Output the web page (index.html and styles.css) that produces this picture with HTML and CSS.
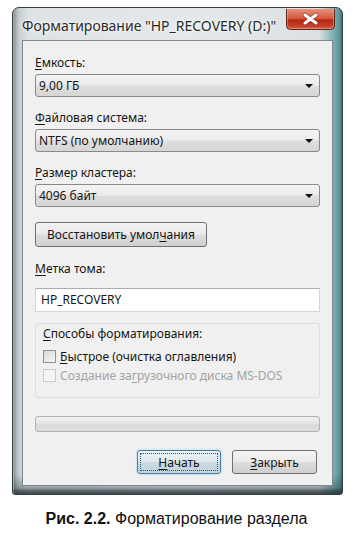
FILE: index.html
```html
<!DOCTYPE html>
<html lang="ru">
<head>
<meta charset="utf-8">
<link rel="stylesheet" href="styles.css">
</head>
<body>
<div class="window">
  <div class="titlebar">
    <span class="title">Форматирование "HP_RECOVERY (D:)"</span>
    <svg class="closebtn" width="49" height="21" viewBox="0 0 49 21">
      <defs>
        <linearGradient id="cg" x1="0" y1="0" x2="0" y2="1">
          <stop offset="0" stop-color="#e8907c"/>
          <stop offset="0.45" stop-color="#d35a40"/>
          <stop offset="0.55" stop-color="#b3270f"/>
          <stop offset="0.85" stop-color="#c6432a"/>
          <stop offset="1" stop-color="#dc7058"/>
        </linearGradient>
      </defs>
      <path d="M0.5 0 V16.5 Q0.5 20.5 4.5 20.5 H44.5 Q48.5 20.5 48.5 16.5 V0" fill="url(#cg)" stroke="#5e2418" stroke-width="1"/>
      <path d="M1.5 0 V16 Q1.5 19.5 5 19.5 H44 Q47.5 19.5 47.5 16 V0" fill="none" stroke="#f2b6a8" stroke-opacity="0.45" stroke-width="1"/>
      <path d="M19 6 L30 14 M30 6 L19 14" stroke="#6a1e12" stroke-width="4.6" stroke-linecap="round" stroke-opacity="0.55"/>
      <path d="M19 6 L30 14 M30 6 L19 14" stroke="#ffffff" stroke-width="3" stroke-linecap="round"/>
    </svg>
  </div>
  <div class="client">
    <div class="label l1"><u>Е</u>мкость:</div>
    <div class="combo"><span>9,00 ГБ</span><i class="arrow"></i></div>
    <div class="label l2"><u>Ф</u>айловая система:</div>
    <div class="combo"><span>NTFS (по умолчанию)</span><i class="arrow"></i></div>
    <div class="label l2"><u>Р</u>азмер кластера:</div>
    <div class="combo"><span>4096 байт</span><i class="arrow"></i></div>
    <div class="btn restore">Восстановить умол<u>ч</u>ания</div>
    <div class="label l3"><u>М</u>етка тома:</div>
    <div class="input">HP_RECOVERY</div>
    <div class="group">
      <div class="glabel"><u>С</u>пособы форматирования:</div>
      <div class="check"><i class="box"></i><span><u>Б</u>ыстрое (очистка оглавления)</span></div>
      <div class="check disabled"><i class="box"></i><span>Создание за<u>г</u>рузочного диска MS-DOS</span></div>
    </div>
    <div class="progress"></div>
    <div class="actions">
      <div class="btn primary"><span class="focus"><u>Н</u>ачать</span></div>
      <div class="btn"><u>З</u>акрыть</div>
    </div>
  </div>
</div>
<div class="caption"><b>Рис. 2.2.</b> Форматирование раздела</div>
</body>
</html>
```
FILE: styles.css
```css
html, body { margin: 0; padding: 0; background: #fff; }
body { width: 353px; height: 533px; overflow: hidden; font-family: "Noto Sans", "DejaVu Sans", sans-serif; }

.window {
  margin: 7px 0 0 12px;
  width: 331px;
  box-sizing: border-box;
  border: 1px solid #363d40;
  border-radius: 7px 7px 3px 3px;
  background:
    linear-gradient(180deg, rgba(0,0,0,0) 0%, rgba(0,0,0,0) 96%, rgba(40,55,60,0.55) 100%),
    linear-gradient(90deg, #8f989c 0%, #c9d0d3 2%, #dde2e4 5%, #e4e8ea 50%, #dbe1e3 93%, #86b4b7 97%, #4a8a8e 100%);
  padding: 0 9px 8px 9px;
  box-shadow: inset 0 -4px 3px rgba(30,45,50,0.6), inset 1px 0 0 #c9cfd2;
}

.titlebar {
  height: 32px;
  position: relative;
  display: flex;
  align-items: center;
}
.title {
  font-size: 14px;
  color: #2a2a2a;
  margin-top: 2px;
  text-shadow: 0 0 6px #fff, 0 0 3px #fff;
}
.closebtn {
  position: absolute;
  right: -2px;
  top: 1px;
  display: block;
  z-index: 2;
}

.client {
  background: #f0f0f0;
  border: 1px solid #7d878c;
  height: 446px;
  box-sizing: border-box;
  padding: 0 12px 0 12px;
  font-size: 12px;
  color: #151515;
}
.label { height: 16px; line-height: 16px; }
.l1 { margin-top: 14px; margin-bottom: 3px; }
.l2 { margin-top: 13px; margin-bottom: 3px; }
.l3 { margin-top: 14px; margin-bottom: 11px; }

.combo {
  height: 23px;
  box-sizing: border-box;
  border: 1px solid #8a8a8a;
  border-radius: 3px;
  background: linear-gradient(#f4f4f4 0%, #ececec 45%, #dddddd 55%, #d6d6d6 100%);
  display: flex; align-items: center; justify-content: space-between;
  padding: 0 6px 0 3px;
}
.arrow {
  width: 0; height: 0;
  border-left: 4px solid transparent;
  border-right: 4px solid transparent;
  border-top: 4px solid #111;
  margin-top: 1px;
}

.btn {
  height: 25px;
  box-sizing: border-box;
  border: 1px solid #707070;
  border-radius: 3px;
  background: linear-gradient(#f3f3f3 0%, #ebebeb 48%, #dddddd 52%, #cfcfcf 100%);
  display: flex; align-items: center; justify-content: center;
  color: #151515;
}
.restore { width: 172px; margin-top: 15px; }

.input {
  height: 24px;
  box-sizing: border-box;
  border: 1px solid #d0d6dc;
  border-top-color: #abadb3;
  background: #fff;
  padding-left: 5px;
  line-height: 22px;
}

.group {
  margin-top: 11px;
  height: 75px;
  box-sizing: border-box;
  border: 1px solid #dcdcdc;
  border-radius: 3px;
  padding: 1px 0 0 7px;
}
.glabel { height: 18px; line-height: 18px; margin-bottom: 5px; }
.check { display: flex; align-items: center; height: 16px; margin-bottom: 3px; }
.box {
  width: 13px; height: 13px; box-sizing: border-box;
  border: 1px solid #8e8f8f;
  background: linear-gradient(135deg, #d8d8d8, #f6f6f6);
  margin-right: 4px;
}
.disabled { color: #a3a3a3; }
.disabled .box { border-color: #cacaca; background: #f4f4f4; }

.progress {
  margin-top: 18px;
  height: 16px;
  box-sizing: border-box;
  border: 1px solid #b2b2b2;
  border-radius: 3px;
  background: linear-gradient(#f0f0f0 0%, #e6e6e6 45%, #d9d9d9 55%, #dedede 100%);
}

.actions {
  margin-top: 18px;
  display: flex; justify-content: flex-end; gap: 11px;
  padding-right: 3px;
}
.actions .btn { width: 85px; height: 24px; }
.btn.primary {
  width: 84px;
  border-color: #3c7fb1;
  background: linear-gradient(#eaf2f6 0%, #dfe9ee 48%, #cbd9e0 52%, #c2d3dc 100%);
  box-shadow: 0 0 2px #7fc1d8;
  padding: 2px;
}
.focus {
  flex: 1; align-self: stretch;
  border: 1px dotted #1b5f73;
  display: flex; align-items: center; justify-content: center;
}

.caption {
  margin-top: 15px;
  text-align: center;
  font-family: "Liberation Sans", Arial, sans-serif;
  font-size: 16px;
  color: #111;
}
u { text-decoration: underline; text-underline-offset: 2px; }
```
